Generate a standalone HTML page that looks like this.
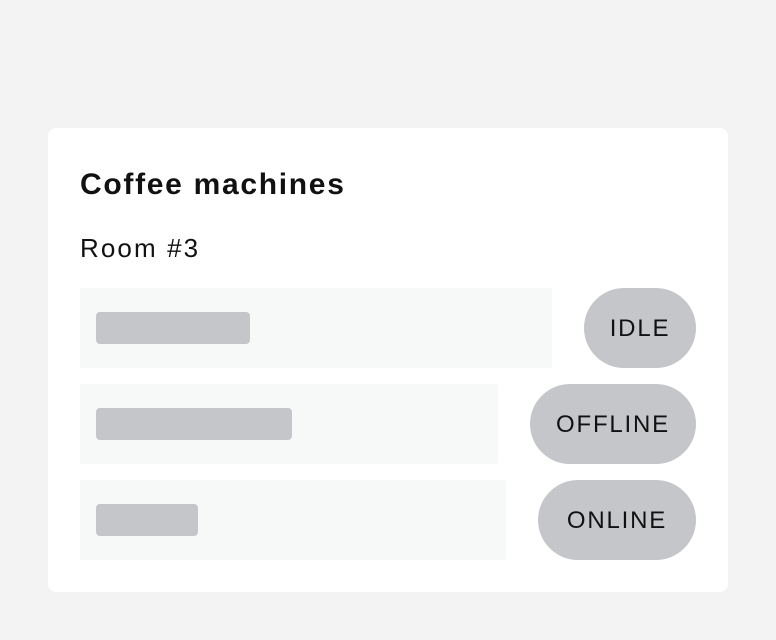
<!DOCTYPE html>
<html><head><meta charset="utf-8"><style>
html,body{margin:0;padding:0;width:776px;height:640px;background:#f3f3f3;font-family:"Liberation Sans",sans-serif;color:#111;}
.card{position:absolute;left:48px;top:128px;width:680px;height:464px;background:#fff;border-radius:8px;}
.t{position:absolute;left:80px;top:165px;font-size:30px;font-weight:bold;line-height:40px;white-space:nowrap;letter-spacing:1.7px}
.r{position:absolute;left:80px;top:230px;font-size:26px;line-height:36px;letter-spacing:2.1px}
.row{position:absolute;left:80px;height:80px;background:#f7f8f8;border-radius:2px}
.bar{position:absolute;left:16px;top:24px;height:32px;background:#c4c6ca;border-radius:4px}
.pill{position:absolute;height:80px;right:80px;background:#c4c6ca;border-radius:40px;font-size:24px;letter-spacing:1.8px;line-height:82px;text-align:center}
</style></head><body>
<div class="card"></div>
<div class="t">Coffee machines</div>
<div class="r">Room #3</div>
<div class="row" style="top:288px;width:472px"><div class="bar" style="width:154px"></div></div>
<div class="pill" style="top:288px;width:112px">IDLE</div>
<div class="row" style="top:384px;width:418px"><div class="bar" style="width:196px"></div></div>
<div class="pill" style="top:384px;width:166px">OFFLINE</div>
<div class="row" style="top:480px;width:426px"><div class="bar" style="width:102px"></div></div>
<div class="pill" style="top:480px;width:158px">ONLINE</div>
</body></html>
